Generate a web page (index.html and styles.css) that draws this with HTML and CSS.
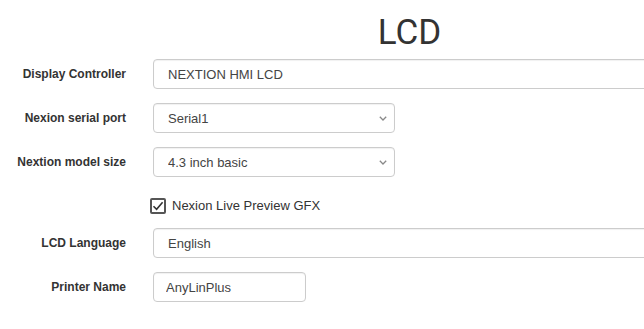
FILE: index.html
```html
<!DOCTYPE html>
<html>
    <head>
        <meta charset="utf-8" />
        <title>LCD</title>
        <link rel="stylesheet" href="styles.css">
    </head>
    <body>
        <form class="settings" name="lcd">
            <div class="row title-row">
                <div class="col-label"></div>
                <div class="col-field">
                    <h1 class="title">LCD</h1>
                </div>
            </div>
            <div class="row">
                <div class="col-label">
                    <label for="controller">Display Controller</label>
                </div>
                <div class="col-field">
                    <input type="text" class="control" id="controller" value="NEXTION HMI LCD" readonly />
                </div>
            </div>
            <div class="row">
                <div class="col-label">
                    <label for="serial">Nexion serial port</label>
                </div>
                <div class="col-field">
                    <div class="select-wrap">
                        <select class="control" id="serial">
                            <option>Serial1</option>
                        </select>
                        <svg class="chevron" width="8" height="5" viewBox="0 0 8 5"><path d="M0.8 0.8 L4 4 L7.2 0.8" fill="none" stroke="#888" stroke-width="1.3"/></svg>
                    </div>
                </div>
            </div>
            <div class="row">
                <div class="col-label">
                    <label for="model">Nextion model size</label>
                </div>
                <div class="col-field">
                    <div class="select-wrap">
                        <select class="control" id="model">
                            <option>4.3 inch basic</option>
                        </select>
                        <svg class="chevron" width="8" height="5" viewBox="0 0 8 5"><path d="M0.8 0.8 L4 4 L7.2 0.8" fill="none" stroke="#888" stroke-width="1.3"/></svg>
                    </div>
                </div>
            </div>
            <div class="row check-row">
                <div class="col-label"></div>
                <div class="col-field">
                    <label class="check">
                        <span class="box">
                            <svg width="12" height="12" viewBox="0 0 12 12"><path d="M1.5 6.2 L4.6 9.3 L10.6 2.3" fill="none" stroke="#333" stroke-width="1.6"/></svg>
                        </span>
                        Nexion Live Preview GFX
                    </label>
                </div>
            </div>
            <div class="row">
                <div class="col-label">
                    <label for="language">LCD Language</label>
                </div>
                <div class="col-field">
                    <input type="text" class="control" id="language" value="English" readonly />
                </div>
            </div>
            <div class="row">
                <div class="col-label">
                    <label for="printer">Printer Name</label>
                </div>
                <div class="col-field">
                    <input type="text" class="control short" id="printer" value="AnyLinPlus" />
                </div>
            </div>
        </form>
    </body>
</html>
```

FILE: styles.css
```css
* {
    box-sizing: border-box;
}

html, body {
    overflow: hidden;
}

body {
    margin: 0;
    background: #fff;
    color: #333;
    font-family: "Liberation Sans", Arial, sans-serif;
    font-size: 13px;
}

.settings {
    width: 681px;
}

.row {
    display: grid;
    grid-template-columns: 138px 1fr;
    margin-bottom: 14px;
}

.col-label {
    padding-right: 12px;
    display: flex;
    align-items: center;
    justify-content: flex-end;
}

.col-label label {
    font-size: 12px;
    font-weight: bold;
    color: #333;
}

.col-field {
    padding: 0 15px;
}

.title-row {
    margin-bottom: 6px;
}

.title {
    margin: 13px 0 0;
    font-family: Roboto, "Liberation Sans", sans-serif;
    font-weight: normal;
    font-size: 35px;
    line-height: 40px;
    text-align: center;
    color: #333;
}

.control {
    display: block;
    width: 100%;
    height: 30px;
    padding: 0 14px;
    border: 1px solid #ccc;
    border-radius: 4px;
    box-shadow: inset 0 1px 1px rgba(0, 0, 0, 0.06);
    background: #fff;
    color: #444;
    font-family: "Liberation Sans", Arial, sans-serif;
    font-size: 13px;
    outline: none;
}

.control.short {
    width: 153px;
    padding-left: 12px;
}

.select-wrap {
    position: relative;
    width: 242px;
}

.select-wrap select {
    appearance: none;
    -webkit-appearance: none;
}

.chevron {
    position: absolute;
    right: 8px;
    top: 13px;
}

.check-row {
    padding-top: 6px;
}

.check {
    display: flex;
    align-items: center;
    height: 17px;
    margin-left: -3px;
    color: #333;
    font-size: 13px;
}

.box {
    width: 16px;
    height: 16px;
    margin-right: 6px;
    border: 2px solid #555;
    border-radius: 2px;
    display: flex;
    align-items: center;
    justify-content: center;
}
```
